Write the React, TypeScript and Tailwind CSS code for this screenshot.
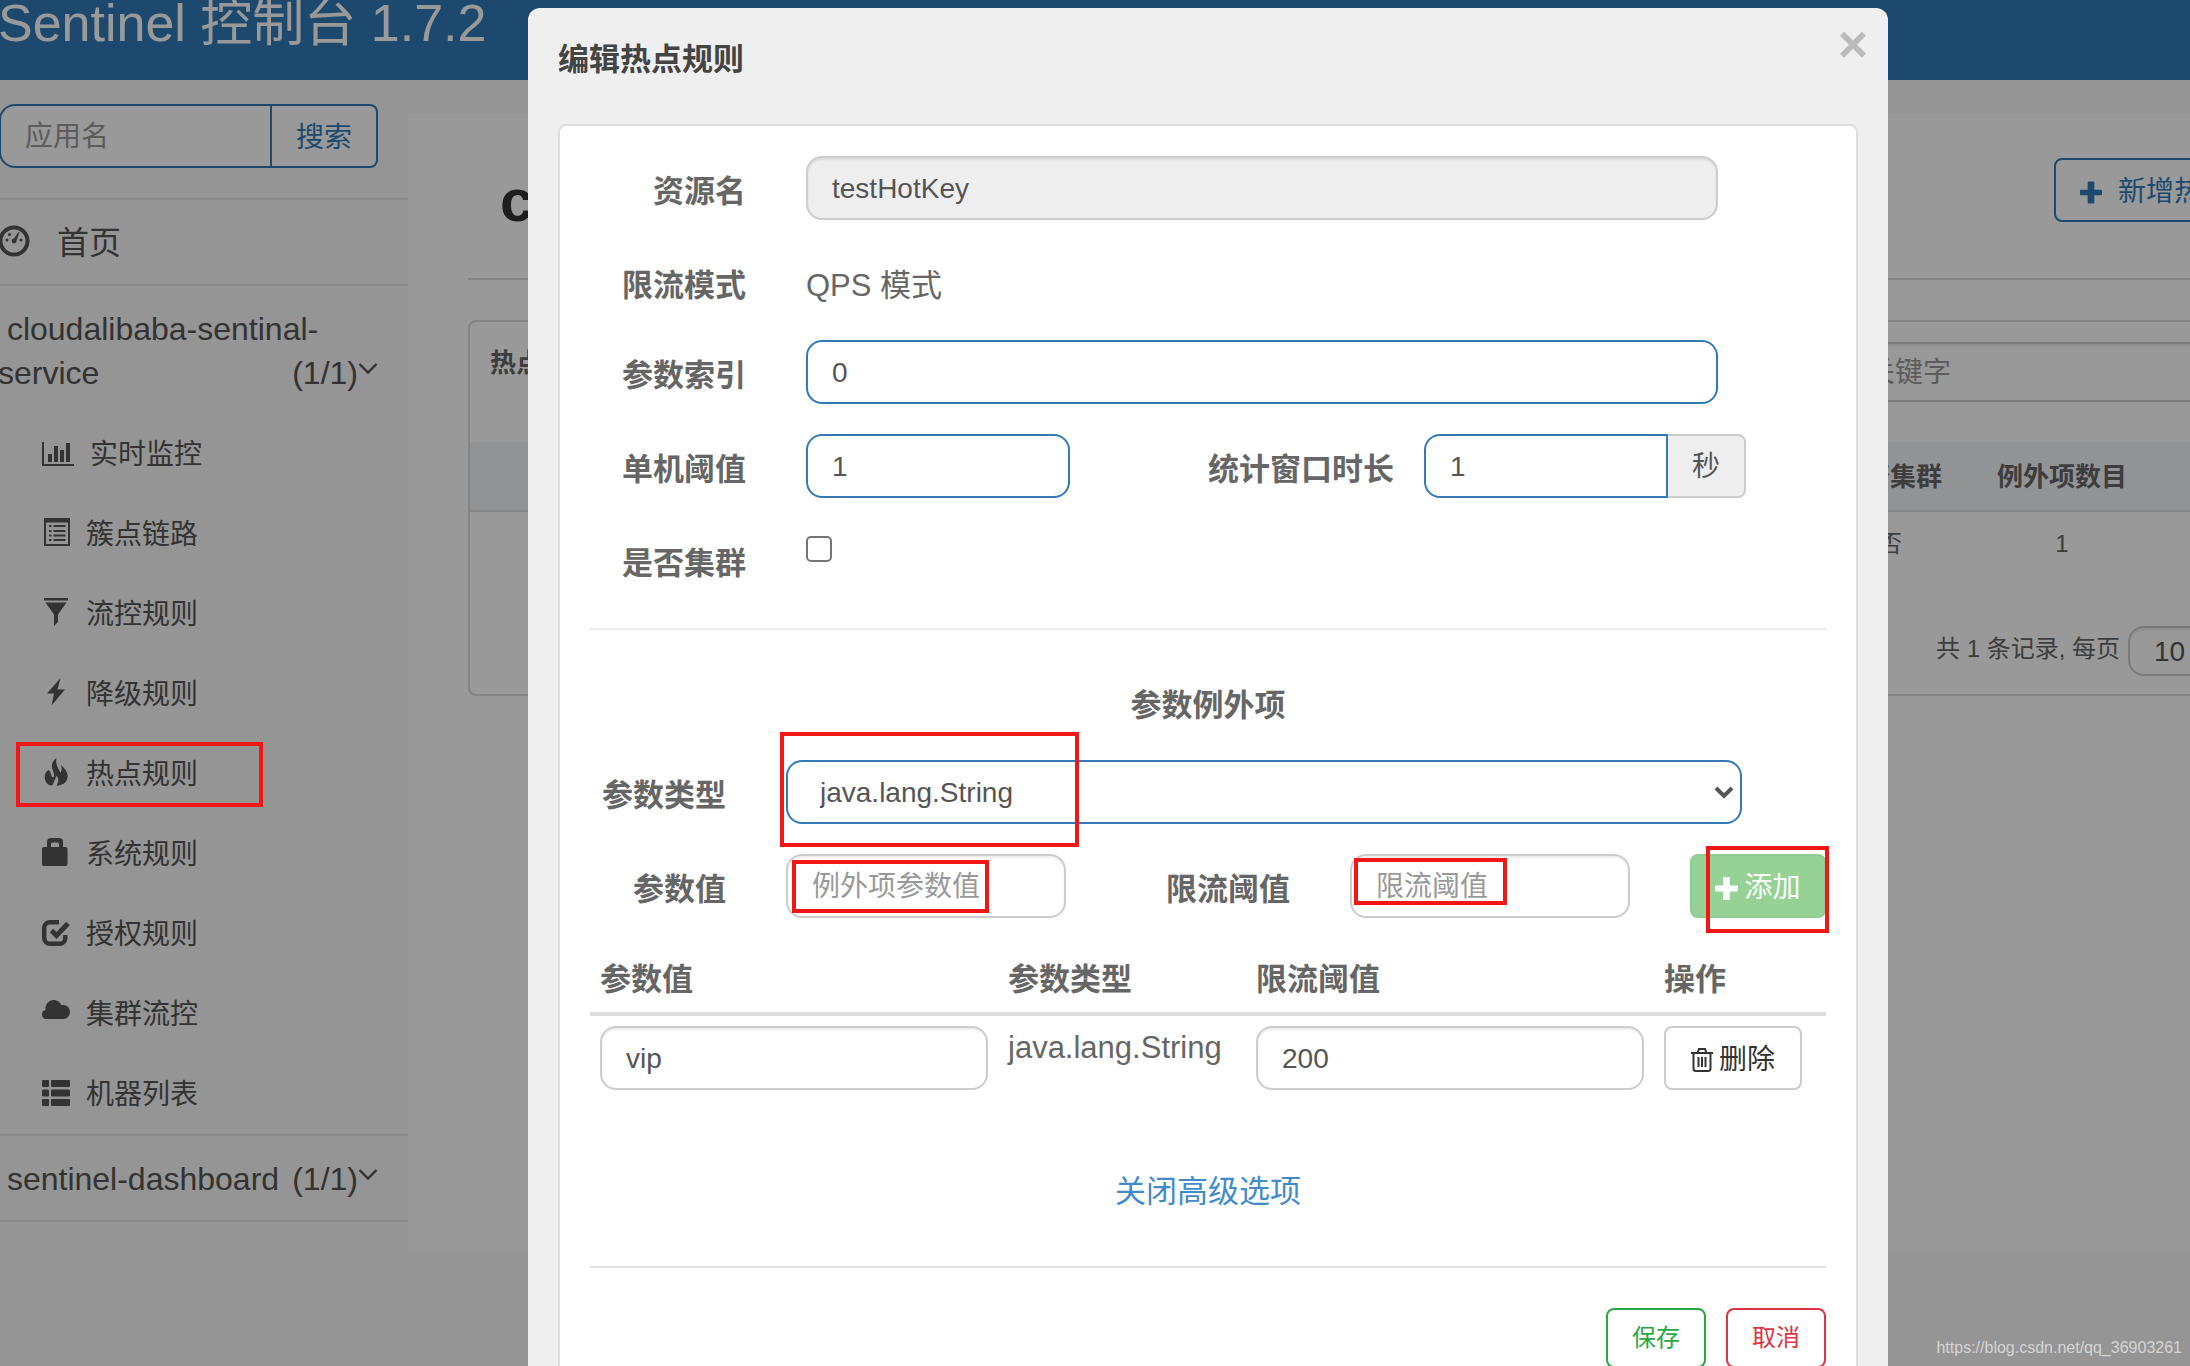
import type { ReactNode } from "react";
import clsx from "clsx";

const BarsIcon = () => (
    <svg width="32" height="28" viewBox="0 -4 32 28" fill="currentColor">
        <path d="M0 0h2v22h30v2H0zM6 12h4v8H6zM12 4h4v16h-4zM18 8h4v12h-4zM24 1h4v19h-4z" />
    </svg>
);

const ListAltIcon = () => (
    <svg width="28" height="28" viewBox="-2 0 28 28" fill="currentColor">
        <path
            fillRule="evenodd"
            d="M0 0h26v28H0zM2 4.500v21.500h22V4.500z"
        />
        <path d="M5 7h2.500v2H5zM9.500 7h12v2h-12zM5 12h2.500v2H5zM9.500 12h12v2h-12zM5 16.500h2.500v2H5zM9.500 16.500h12v2h-12zM5 21h2.500v2H5zM9.500 21h12v2h-12z" />
    </svg>
);

const FilterIcon = () => (
    <svg width="28" height="28" viewBox="-2 0 28 28" fill="currentColor">
        <path d="M0 0h24v2.500H0zM1.500 4.500h21L14 16.500V24l-4 4V16.500z" />
    </svg>
);

const FlashIcon = () => (
    <svg width="28" height="28" viewBox="-5 0 28 28" fill="currentColor">
        <path d="M13.500 0L0 15.500h7L4.600 27.500 18 11.500h-7.500z" />
    </svg>
);

const FireIcon = () => (
    <svg width="28" height="28" viewBox="-2 0 28 29" fill="currentColor">
        <path d="M12.500 0C8.500 3 7 7 8 11c.8 3 2.300 4.500 2 7.500-.2 1.500-1.600 2-2.300.8C6.700 17.500 7 14.500 4 12.500 1.500 14.500 0 17 .3 20.500.7 24.500 3 27.800 6.500 28.500c1.800.2 2.600-.8 3-3 .5-2.500 2.500-3.500 2.500-7 2.300 1.500 3 4 2 6.500-.7 1.700-1 2.800-1.500 3.800 6-.3 11-3 11.500-9 .4-5-2.500-8.500-6.800-12.500.8 3.500 1 5.500-.5 8C15 12 11 7 12.500 0z" />
    </svg>
);

const LockIcon = () => (
    <svg width="28" height="28" viewBox="0 0 28 28" fill="currentColor">
        <path
            fillRule="evenodd"
            d="M5 9V4a4 4 0 0 1 4-4h8a4 4 0 0 1 4 4v5h2.500a2 2 0 0 1 2 2v15a2 2 0 0 1-2 2H2a2 2 0 0 1-2-2V11a2 2 0 0 1 2-2zM9 9h8V6a1.500 1.500 0 0 0-1.500-1.500h-5A1.500 1.500 0 0 0 9 6z"
        />
    </svg>
);

const CheckIcon = () => (
    <svg width="28" height="28" viewBox="0 -2 28 28" fill="none" stroke="currentColor">
        <path
            d="M17 2.200H8A5.800 5.800 0 0 0 2.200 8v10A5.800 5.800 0 0 0 8 23.800h9.500a5.800 5.800 0 0 0 5.800-5.800v-3"
            strokeWidth="4.400"
        />
        <path d="M9.500 10.500l5 5L26 3.500" strokeWidth="4.800" />
    </svg>
);

const CloudIcon = () => (
    <svg width="28" height="28" viewBox="0 -2 28 28" fill="currentColor">
        <path d="M4.500 19a4.500 4.500 0 0 1-1-8.900C3 4 7 0 11.500 0c4 0 6.800 2.500 7.800 5.200 4.700-1.400 8.700 2 8.700 6.600 0 4-3 7.200-7 7.200z" />
    </svg>
);

const ThListIcon = () => (
    <svg width="28" height="28" viewBox="0 -2 28 28" fill="currentColor">
        {[0, 9.5, 19].map((y) => (
            <g key={y}>
                <rect x="0" y={y} width="7" height="7" rx="1" />
                <rect x="9" y={y} width="19" height="7" rx="1" />
            </g>
        ))}
    </svg>
);

const DashboardIcon = () => (
    <svg className="-mt-1" width="32" height="32" viewBox="0 0 32 32" fill="currentColor">
        <circle cx="15" cy="16" r="13.500" fill="none" stroke="currentColor" strokeWidth="4" />
        <circle cx="8" cy="15" r="1.500" />
        <circle cx="10.500" cy="9.500" r="1.500" />
        <circle cx="22" cy="15" r="1.500" />
        <circle cx="15" cy="16" r="2.400" />
        <path d="M14 15l5.500-8 1 .6L17 17z" />
    </svg>
);

const ChevronIcon = () => (
    <svg
        className="inline-block align-top mt-3"
        width="20"
        height="12"
        viewBox="0 0 20 12"
        fill="none"
        stroke="currentColor"
        strokeWidth="2.400"
    >
        <path d="M1.500 1l8.500 8.500L18.500 1" />
    </svg>
);

const PlusIcon = () => (
    <svg width="23" height="23" viewBox="0 0 23 23" fill="currentColor">
        <path d="M9 0h5a1 1 0 0 1 1 1v7.500h7a1 1 0 0 1 1 1v4a1 1 0 0 1-1 1h-7V22a1 1 0 0 1-1 1H9a1 1 0 0 1-1-1v-7.500H1a1 1 0 0 1-1-1v-4a1 1 0 0 1 1-1h7V1a1 1 0 0 1 1-1z" />
    </svg>
);

const TrashIcon = () => (
    <svg width="22" height="24" viewBox="0 0 22 24" fill="none" stroke="currentColor" strokeWidth="2">
        <path d="M0 5h22M6.500 5l1.500-4h6l1.500 4M2.500 5v15.500a2.500 2.500 0 0 0 2.500 2.500h12a2.500 2.500 0 0 0 2.500-2.500V5M7.500 9v10M11 9v10M14.500 9v10" />
    </svg>
);

const menu: { label: string; icon: ReactNode; marked?: boolean }[] = [
    { label: "实时监控", icon: <BarsIcon /> },
    { label: "簇点链路", icon: <ListAltIcon /> },
    { label: "流控规则", icon: <FilterIcon /> },
    { label: "降级规则", icon: <FlashIcon /> },
    { label: "热点规则", icon: <FireIcon />, marked: true },
    { label: "系统规则", icon: <LockIcon /> },
    { label: "授权规则", icon: <CheckIcon /> },
    { label: "集群流控", icon: <CloudIcon /> },
    { label: "机器列表", icon: <ThListIcon /> },
];

const fieldBase =
    "h-16 min-w-0 rounded-2xl border-2 px-6 pt-0.5 text-[28px] text-[#555] placeholder:text-[#999] outline-none";
const fieldGray = "border-[#ccc] bg-white shadow-[inset_0_2px_2px_rgba(0,0,0,0.075)]";
const fieldBlue = "border-[#337ab7] bg-white";

// red frame laid over a control
const Mark = ({ className }: { className: string }) => (
    <span className={clsx("absolute border-4 border-[#f21717] pointer-events-none", className)} />
);

const Label = ({
    id,
    className,
    children,
}: {
    id?: string;
    className?: string;
    children: ReactNode;
}) => (
    <label
        htmlFor={id}
        className={clsx("shrink-0 pt-[15px] text-right font-bold leading-[42px]", className)}
    >
        {children}
    </label>
);

const AppName = ({ name }: { name: string }) => (
    <a href="#" className="block pt-[21px] pb-[19px] -ml-0.5 w-[380px] leading-[44px] text-[32px]">
        &nbsp;{name}
        <span className="float-right whitespace-nowrap">
            (1/1)
            <ChevronIcon />
        </span>
    </a>
);

const Sidebar = () => (
    <aside className="w-[408px] shrink-0 pt-6 text-[#555]">
        <form className="flex -ml-px w-[379px] mb-[30px]">
            <input
                aria-label="应用名"
                placeholder="应用名"
                className="h-16 min-w-0 flex-1 rounded-l-2xl border-2 border-[#337ab7] bg-white px-6 pt-0.5 text-[28px] placeholder:text-[#999]"
            />
            <button
                type="button"
                className="h-16 w-[106px] rounded-r-lg border-2 border-l-0 border-[#337ab7] bg-white pt-1 text-[28px] text-[#337ab7]"
            >
                搜索
            </button>
        </form>
        <nav>
            <a
                href="#"
                className="flex items-center gap-[26px] border-t-2 border-[#e7e7e7] pt-[21px] pb-[19px] leading-[44px] text-[32px] -ml-px"
            >
                <DashboardIcon />
                首页
            </a>
            <div className="border-t-2 border-[#e7e7e7]">
                <AppName name="cloudalibaba-sentinal-service" />
                <ul>
                    {menu.map((item) => (
                        <li key={item.label} className="relative">
                            <a
                                href="#"
                                className="flex h-20 items-center gap-4 pl-[42px] text-[28px]"
                            >
                                <span className="-mt-1">{item.icon}</span>
                                <span className="pt-0.5">{item.label}</span>
                            </a>
                            {item.marked && (
                                <Mark className="left-4 top-2 z-30 h-[65px] w-[247px]" />
                            )}
                        </li>
                    ))}
                </ul>
            </div>
            <div className="border-y-2 border-[#e7e7e7]">
                <AppName name="sentinel-dashboard" />
            </div>
        </nav>
    </aside>
);

const RulePage = () => (
    <main className="mt-[34px] h-[1136px] min-w-0 flex-1 overflow-hidden bg-white pt-11 pl-[60px] text-[#666]">
        <div className="w-[calc(100%+178px)]">
            <div className="flex h-[122px] items-start justify-between border-b-2 border-[#ddd]">
                <h1 className="pl-8 text-[60px] font-bold leading-[86px] text-[#333]">
                    cloudalibaba-sentinal-service
                </h1>
                <button className="flex h-16 w-[314px] items-center gap-4 whitespace-nowrap rounded-lg border-2 border-[#337ab7] px-6 pt-1 text-[28px] text-[#337ab7]">
                    <PlusIcon />
                    新增热点限流规则
                </button>
            </div>
            <section className="mt-10 rounded-lg border-2 border-[#ddd]">
                <div className="flex h-[120px] items-start justify-between pt-5 pl-5">
                    <h2 className="text-[26px] font-bold leading-[42px]">热点参数限流规则</h2>
                    <input
                        aria-label="关键字"
                        placeholder="关键字"
                        className="h-[60px] w-[525px] border-2 border-[#ccc] px-6 pt-0.5 text-[28px] shadow-[inset_0_2px_2px_rgba(0,0,0,0.075)] placeholder:text-[#999]"
                    />
                </div>
                <table className="w-full table-fixed border-separate border-spacing-0 text-[26px]">
                    <thead>
                        <tr className="h-[70px] bg-[#f2f5f8]">
                            <th className="border-b-2 border-[#ddd] pt-0.5">资源名</th>
                            <th className="w-[172px] border-b-2 border-[#ddd] pt-0.5">是否集群</th>
                            <th className="w-[172px] border-b-2 border-[#ddd] pt-0.5">例外项数目</th>
                            <th className="w-[218px] border-b-2 border-[#ddd] pt-0.5">操作</th>
                        </tr>
                    </thead>
                    <tbody>
                        <tr className="h-[62px] text-center text-2xl">
                            <td className="pt-0.5">testHotKey</td>
                            <td className="pt-0.5">否</td>
                            <td className="pt-0.5">1</td>
                            <td className="pt-0.5">编辑</td>
                        </tr>
                    </tbody>
                </table>
                <div className="flex h-[120px] items-start justify-end gap-2 pt-[52px] pr-[118px] text-2xl">
                    <label htmlFor="page-size" className="leading-[46px]">
                        共 1 条记录, 每页
                    </label>
                    <input
                        id="page-size"
                        defaultValue="10"
                        className="h-[50px] w-[120px] rounded-2xl border-2 border-[#ccc] px-6 pt-0.5 text-[28px] text-[#555] shadow-[inset_0_2px_2px_rgba(0,0,0,0.075)]"
                    />
                </div>
            </section>
        </div>
    </main>
);

const RuleForm = () => (
    <form className="rounded-lg border-2 border-[#ddd] bg-white p-[30px] text-[31px] text-[#666]">
        <div className="mb-[30px] flex gap-[60px]">
            <Label id="resource" className="w-[156px]">资源名</Label>
            <input
                id="resource"
                readOnly
                defaultValue="testHotKey"
                className={clsx(
                    fieldBase,
                    "mr-[108px] flex-1 border-[#ccc] bg-[#eee] shadow-[inset_0_2px_2px_rgba(0,0,0,0.075)]"
                )}
            />
        </div>
        <div className="mb-[30px] flex h-[60px] gap-[60px]">
            <span className="w-[156px] pt-[15px] text-right font-bold leading-[42px]">限流模式</span>
            <p className="pt-[15px] leading-[42px]">QPS 模式</p>
        </div>
        <div className="mb-[30px] flex gap-[60px]">
            <Label id="index" className="w-[156px]">参数索引</Label>
            <input
                id="index"
                defaultValue="0"
                className={clsx(fieldBase, fieldBlue, "mr-[108px] flex-1")}
            />
        </div>
        <div className="mb-[30px] flex">
            <Label id="count" className="mr-[60px] w-[156px]">单机阈值</Label>
            <input
                id="count"
                defaultValue="1"
                className={clsx(fieldBase, fieldBlue, "w-[264px]")}
            />
            <Label id="duration" className="mr-[30px] flex-1">统计窗口时长</Label>
            <div className="mr-20 flex w-[322px]">
                <input
                    id="duration"
                    defaultValue="1"
                    className={clsx(fieldBase, fieldBlue, "flex-1 rounded-r-none")}
                />
                <span className="flex h-16 w-[78px] items-center justify-center rounded-r-lg border-2 border-l-0 border-[#ccc] bg-[#eee] pt-0.5 text-[28px] text-[#555]">
                    秒
                </span>
            </div>
        </div>
        <div className="flex h-[100px] gap-[60px]">
            <Label id="cluster" className="w-[156px]">是否集群</Label>
            <input
                id="cluster"
                type="checkbox"
                className="mt-2 size-[26px] appearance-none rounded-[5px] border-2 border-[#767676] bg-white"
            />
        </div>
        <hr className="border-t-2 border-[#eee]" />

        <h3 className="mt-[55px] mb-[33px] text-center font-bold leading-[42px]">参数例外项</h3>
        <div className="mb-[30px] flex gap-[60px]">
            <Label id="type" className="w-[136px]">参数类型</Label>
            <div className="relative mr-[84px] flex-1">
                <select
                    id="type"
                    className="h-16 w-full appearance-none rounded-2xl border-2 border-[#337ab7] bg-white px-8 pt-0.5 text-[28px] text-[#555]"
                >
                    <option>java.lang.String</option>
                </select>
                <svg
                    className="pointer-events-none absolute right-2 top-[26px] text-[#555]"
                    width="20"
                    height="13"
                    viewBox="0 0 20 13"
                    fill="none"
                    stroke="currentColor"
                    strokeWidth="4"
                >
                    <path d="M2 2l8 8 8-8" />
                </svg>
                <Mark className="-left-1.5 -top-7 h-[115px] w-[299px]" />
            </div>
        </div>
        <div className="flex">
            <Label id="value" className="mr-[60px] w-[136px]">参数值</Label>
            <div className="relative">
                <input
                    id="value"
                    placeholder="例外项参数值"
                    className={clsx(fieldBase, fieldGray, "w-[280px]")}
                />
                <Mark className="left-1.5 top-1.5 h-[53px] w-[197px]" />
            </div>
            <Label id="limit" className="mr-[60px] flex-1">限流阈值</Label>
            <div className="relative mr-[60px]">
                <input
                    id="limit"
                    placeholder="限流阈值"
                    className={clsx(fieldBase, fieldGray, "w-[280px]")}
                />
                <Mark className="left-1 top-1 h-[47px] w-[153px]" />
            </div>
            <div className="relative">
                <button
                    type="button"
                    className="flex h-16 w-[136px] items-center justify-center gap-1.5 rounded-lg border-2 border-[#8fcc8f] bg-[#96d296] pt-1 text-[28px] text-white"
                >
                    <PlusIcon />
                    添加
                </button>
                <Mark className="left-4 -top-2 h-[87px] w-[123px]" />
            </div>
        </div>

        <table className="mt-[30px] w-full table-fixed border-separate border-spacing-0 text-left leading-[42px]">
            <thead>
                <tr>
                    <th className="w-[408px] border-b-4 border-[#ddd] px-2.5 py-[11px]">参数值</th>
                    <th className="w-[248px] border-b-4 border-[#ddd] px-2.5 py-[11px]">参数类型</th>
                    <th className="w-[408px] border-b-4 border-[#ddd] px-2.5 py-[11px]">限流阈值</th>
                    <th className="border-b-4 border-[#ddd] px-2.5 py-[11px]">操作</th>
                </tr>
            </thead>
            <tbody>
                <tr className="align-top">
                    <td className="p-2.5">
                        <input
                            aria-label="参数值"
                            defaultValue="vip"
                            className={clsx(fieldBase, fieldGray, "block w-full")}
                        />
                    </td>
                    <td className="px-2.5 pt-[11px]">java.lang.String</td>
                    <td className="p-2.5">
                        <input
                            aria-label="限流阈值"
                            defaultValue="200"
                            className={clsx(fieldBase, fieldGray, "block w-full")}
                        />
                    </td>
                    <td className="p-2.5">
                        <button
                            type="button"
                            className="flex h-16 w-[138px] items-center justify-center gap-1.5 rounded-lg border-2 border-[#ccc] bg-white pt-1 text-[28px] text-[#333]"
                        >
                            <TrashIcon />
                            删除
                        </button>
                    </td>
                </tr>
            </tbody>
        </table>

        <p className="mt-[71px] mb-[53px] text-center leading-[42px]">
            <a href="#" className="text-[#428bca]">关闭高级选项</a>
        </p>
        <hr className="border-t-2 border-[#e2e2e2]" />
        <div className="mt-10 flex justify-end gap-5 text-2xl">
            <button
                type="button"
                className="h-[60px] w-[100px] rounded-lg border-2 border-[#28a745] text-[#28a745]"
            >
                保存
            </button>
            <button
                type="button"
                className="h-[60px] w-[100px] rounded-lg border-2 border-[#dc3545] text-[#dc3545]"
            >
                取消
            </button>
        </div>
    </form>
);

const App = () => {
    return (
        <div className="relative h-screen overflow-hidden bg-[#f8f8f8] font-['Liberation_Sans','Noto_Sans_CJK_SC',sans-serif]">
            <header className="h-20 bg-[#337ab7]">
                <p className="-ml-0.5 text-[52px] leading-[46px] text-white">
                    Sentinel 控制台 1.7.2
                </p>
            </header>
            <div className="flex items-start">
                <Sidebar />
                <RulePage />
            </div>

            <div className="absolute inset-0 z-20 overflow-hidden bg-black/40 pt-2 pr-[302px] pl-[528px]">
                <div
                    role="dialog"
                    aria-label="编辑热点规则"
                    className="relative rounded-xl bg-[#efefef] px-[30px] pb-[30px]"
                >
                    <h2 className="h-[116px] pt-[31px] text-[31px] font-bold leading-[42px] text-[#444]">
                        编辑热点规则
                    </h2>
                    <button
                        aria-label="关闭"
                        className="absolute right-5 top-3 text-[52px] font-bold leading-[48px] text-[#bbb]"
                    >
                        ×
                    </button>
                    <RuleForm />
                </div>
            </div>
            <span className="absolute right-2 bottom-1.5 z-30 text-base leading-6 text-[#d4d4d4]">
                https://blog.csdn.net/qq_36903261
            </span>
        </div>
    );
};

export default App;
